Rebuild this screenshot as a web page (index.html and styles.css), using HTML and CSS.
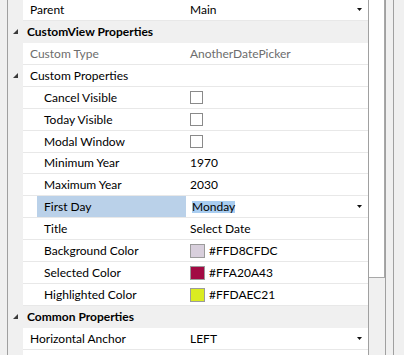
FILE: index.html
```html
<!DOCTYPE html>
<html>
<head>
<meta charset="utf-8">
<link rel="stylesheet" href="styles.css">
</head>
<body>
<div class="frame">
  <div class="panel">
    <div class="rows">
      <div class="row">
        <div class="gut"></div>
        <div class="main"><div class="label">Parent</div><div class="value"><span>Main</span><svg class="drop" width="5" height="3" viewBox="0 0 5 3"><polygon points="0,0 5,0 2.5,3"/></svg></div></div>
      </div>
      <div class="row cat">
        <div class="gut"><svg class="exp" width="5" height="5" viewBox="0 0 5 5"><polygon points="5,0 5,5 0,5"/></svg></div>
        <div class="main">CustomView Properties</div>
      </div>
      <div class="row muted">
        <div class="gut"></div>
        <div class="main"><div class="label">Custom Type</div><div class="value">AnotherDatePicker</div></div>
      </div>
      <div class="row">
        <div class="gut"><svg class="exp" width="5" height="5" viewBox="0 0 5 5"><polygon points="5,0 5,5 0,5"/></svg></div>
        <div class="main"><div class="label">Custom Properties</div><div class="value"></div></div>
      </div>
      <div class="row nested">
        <div class="gut"></div>
        <div class="main"><div class="label">Cancel Visible</div><div class="value"><span class="check"></span></div></div>
      </div>
      <div class="row nested">
        <div class="gut"></div>
        <div class="main"><div class="label">Today Visible</div><div class="value"><span class="check"></span></div></div>
      </div>
      <div class="row nested">
        <div class="gut"></div>
        <div class="main"><div class="label">Modal Window</div><div class="value"><span class="check"></span></div></div>
      </div>
      <div class="row nested">
        <div class="gut"></div>
        <div class="main"><div class="label">Minimum Year</div><div class="value">1970</div></div>
      </div>
      <div class="row nested">
        <div class="gut"></div>
        <div class="main"><div class="label">Maximum Year</div><div class="value">2030</div></div>
      </div>
      <div class="row nested selected">
        <div class="gut"></div>
        <div class="main"><div class="label">First Day</div><div class="value"><span class="sel-text">Monday</span><svg class="drop" width="5" height="3" viewBox="0 0 5 3"><polygon points="0,0 5,0 2.5,3"/></svg></div></div>
      </div>
      <div class="row nested">
        <div class="gut"></div>
        <div class="main"><div class="label">Title</div><div class="value">Select Date</div></div>
      </div>
      <div class="row nested">
        <div class="gut"></div>
        <div class="main"><div class="label">Background Color</div><div class="value"><span class="swatch" style="background:#D8CFDC"></span><span>#FFD8CFDC</span></div></div>
      </div>
      <div class="row nested">
        <div class="gut"></div>
        <div class="main"><div class="label">Selected Color</div><div class="value"><span class="swatch" style="background:#A20A43"></span><span>#FFA20A43</span></div></div>
      </div>
      <div class="row nested">
        <div class="gut"></div>
        <div class="main"><div class="label">Highlighted Color</div><div class="value"><span class="swatch" style="background:#DAEC21"></span><span>#FFDAEC21</span></div></div>
      </div>
      <div class="row cat">
        <div class="gut"><svg class="exp" width="5" height="5" viewBox="0 0 5 5"><polygon points="5,0 5,5 0,5"/></svg></div>
        <div class="main">Common Properties</div>
      </div>
      <div class="row">
        <div class="gut"></div>
        <div class="main"><div class="label">Horizontal Anchor</div><div class="value"><span>LEFT</span><svg class="drop" width="5" height="3" viewBox="0 0 5 3"><polygon points="0,0 5,0 2.5,3"/></svg></div></div>
      </div>
      <div class="row">
        <div class="gut"></div>
        <div class="main"><div class="label"></div><div class="value"></div></div>
      </div>
    </div>
    <div class="vscroll"><div class="thumb"></div></div>
  </div>
  <div class="gap"></div>
  <div class="edge"></div>
</div>
</body>
</html>
```
FILE: styles.css
```css
* { box-sizing: border-box; }
html, body { margin: 0; height: 355px; overflow: hidden; }
body {
  background: #f0f0f0;
  font-family: Lato, "Noto Sans", sans-serif;
  font-size: 12px;
  color: #000;
}
.frame { display: flex; height: 355px; padding-left: 7px; }
.panel {
  display: flex;
  width: 379px;
  height: 355px;
  border-left: 1px solid #a0a0a0;
  border-right: 1px solid #a0a0a0;
  background: #fff;
  overflow: hidden;
}
.rows { width: 360px; flex: none; margin-top: -0.93px; }
.row { display: flex; height: 21.93px; }
.gut {
  width: 15px; flex: none; background: #f0f0f0;
  display: flex; align-items: center; justify-content: center;
  padding-right: 1px;
}
.exp { fill: #3a3a3a; display: block; }
.main {
  flex: 1;
  display: grid;
  grid-template-columns: 163px 1fr;
  border-bottom: 1px solid #e8e8e8;
}
.label { padding-left: 7px; display: flex; align-items: center; white-space: nowrap; }
.nested .label { margin-left: 14px; }
.value {
  padding-left: 4px; padding-right: 6px;
  display: flex; align-items: center; gap: 4px; white-space: nowrap;
}
.drop { margin-left: auto; fill: #111; display: block; }
.cat { background: #f0f0f0; }
.cat .main {
  border-bottom-color: #f0f0f0;
  display: flex; align-items: center;
  padding-left: 4px; font-weight: bold;
}
.muted { color: #6d6d6d; }
.selected .label { background: #bad1e9; }
.sel-text {
  display: inline-block; height: 12px; line-height: 12px;
  background: #a9cdf0; margin-left: 2px;
}
.check { width: 13px; height: 13px; border: 1px solid #8a8a8a; background: #fff; display: block; }
.swatch { width: 15px; height: 14px; border: 1px solid #9b9b9b; display: block; }
.vscroll { width: 17px; flex: none; border-left: 1px solid #a0a0a0; background: #f0f0f0; }
.thumb {
  height: 279px; margin-top: -1px;
  background: #fff;
  border-right: 1px solid #a8a8a8;
  border-bottom: 1px solid #a8a8a8;
}
.gap { width: 7px; flex: none; }
.edge { width: 1px; flex: none; background: #a0a0a0; }
```
